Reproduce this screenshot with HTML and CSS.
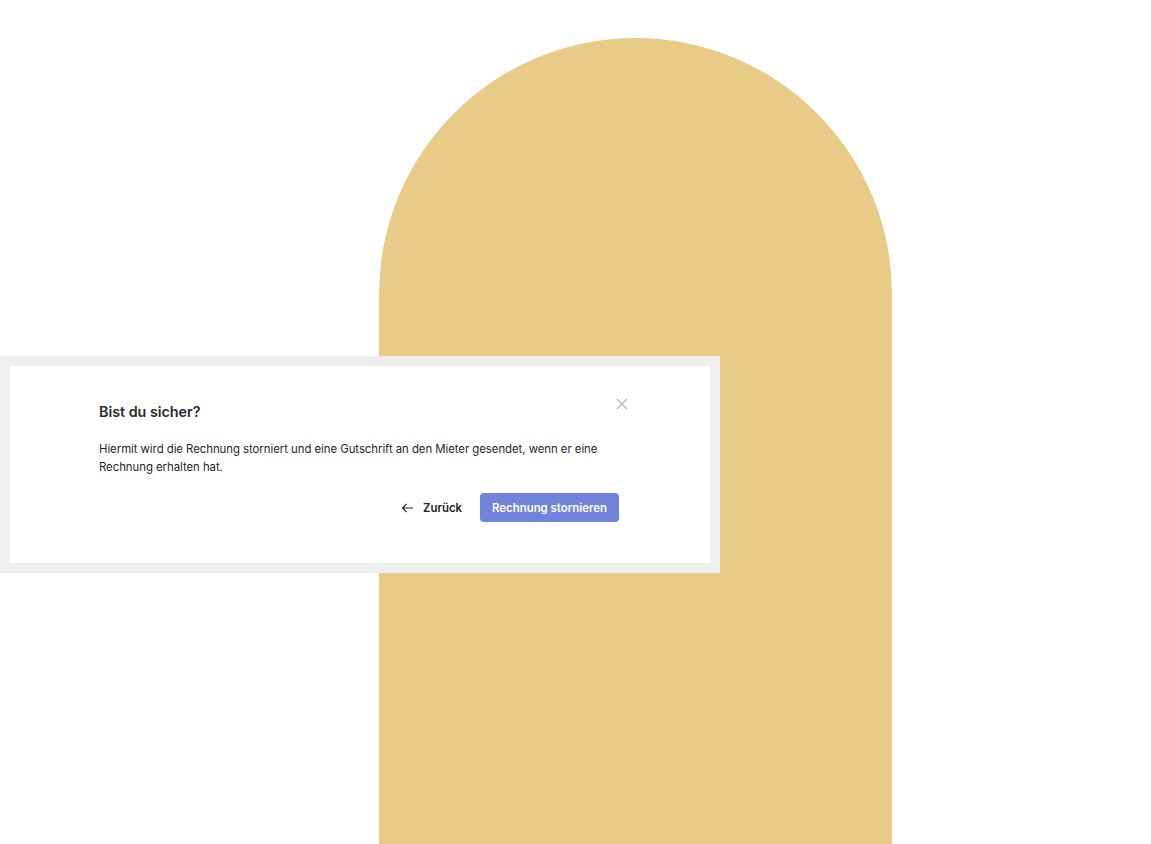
FILE: index.html
```html
<!DOCTYPE html>
<html lang="de">
<head>
<meta charset="utf-8">
<title>Rechnung stornieren</title>
<link rel="stylesheet" href="styles.css">
</head>
<body>
<div class="page">
  <div class="arch"></div>
  <div class="modal-frame">
    <div class="modal">
      <button class="close" aria-label="Schließen">
        <svg width="12" height="12" viewBox="0 0 12 12"><path d="M1 1L11 11M11 1L1 11" stroke="#b5b5b5" stroke-width="1.2" fill="none"/></svg>
      </button>
      <div class="modal-body">
        <h2 class="title">Bist du sicher?</h2>
        <p class="text">Hiermit wird die Rechnung storniert und eine Gutschrift an den Mieter gesendet, wenn er eine Rechnung erhalten hat.</p>
        <div class="actions">
          <button class="back">
            <svg width="13" height="10" viewBox="0 0 13 10"><path d="M12 5H1.5M5.5 1L1.5 5L5.5 9" stroke="#222" stroke-width="1.1" fill="none"/></svg>
            <span>Zurück</span>
          </button>
          <button class="primary">Rechnung stornieren</button>
        </div>
      </div>
    </div>
  </div>
</div>
</body>
</html>
```

FILE: styles.css
```css
html, body {
  margin: 0;
  padding: 0;
  background: #ffffff;
}
body {
  font-family: Inter, "Noto Sans", "Liberation Sans", sans-serif;
  color: #222;
  overflow: hidden;
}
.page {
  position: relative;
  width: 1151px;
  height: 844px;
}
.arch {
  margin: 0 0 0 379px;
  position: relative;
  top: 38px;
  width: 513px;
  height: 806px;
  background: #e8cb86;
  border-radius: 256.5px 256.5px 0 0;
}
.modal-frame {
  position: absolute;
  left: 0;
  top: 356px;
  width: 700px;
  padding: 10px;
  background: #efefef;
}
.modal {
  position: relative;
  background: #fff;
  height: 197px;
  box-sizing: border-box;
  padding: 36px 91px 0 89px;
}
.close {
  position: absolute;
  top: 32px;
  right: 82px;
  width: 12px;
  height: 12px;
  padding: 0;
  border: 0;
  background: none;
  display: flex;
}
.title {
  margin: 0;
  font-size: 14.3px;
  line-height: 20px;
  font-weight: 600;
  color: #2b2b2b;
}
.text {
  margin: 18px 0 0 0;
  font-size: 11.4px;
  letter-spacing: -0.05px;
  line-height: 18px;
  color: #1f1f1f;
}
.actions {
  margin-top: 17px;
  display: flex;
  justify-content: flex-end;
  align-items: center;
  gap: 18px;
}
.back {
  display: flex;
  align-items: center;
  gap: 9px;
  border: 0;
  background: none;
  padding: 0;
  font-family: inherit;
  font-size: 11.4px;
  font-weight: 600;
  color: #222;
}
.primary {
  height: 29px;
  padding: 0 12px;
  border: 0;
  border-radius: 4px;
  background: #7084dc;
  color: #fff;
  font-family: inherit;
  font-size: 11.4px;
  font-weight: 600;
}
```
